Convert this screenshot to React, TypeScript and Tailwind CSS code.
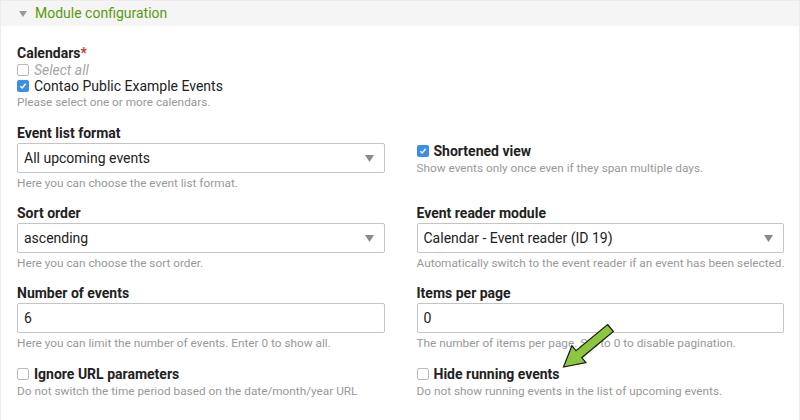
import React from "react";

const font = { fontFamily: "Roboto, 'Liberation Sans', sans-serif" };

function Check({ checked }: { checked?: boolean }) {
  if (checked) {
    return (
      <span className="mr-[5px] inline-flex h-[12px] w-[12px] shrink-0 items-center justify-center rounded-[2px] bg-[#3b8fe8]">
        <svg width="8" height="8" viewBox="0 0 8 8">
          <path d="M1.3 4.2 L3.2 6 L6.7 1.8" fill="none" stroke="#fff" strokeWidth="1.4" />
        </svg>
      </span>
    );
  }
  return (
    <span className="mr-[5px] inline-block h-[12px] w-[12px] shrink-0 rounded-[2px] border border-[#b9b9b9] bg-white" />
  );
}

function Select({ value }: { value: string }) {
  return (
    <div className="flex h-[30px] items-center justify-between rounded-[2px] border border-[#c4c4c4] bg-white pl-[6px] pr-[10px] text-[14px] text-[#222]">
      <span>{value}</span>
      <svg width="9" height="7" viewBox="0 0 9 7">
        <path d="M0 0 H9 L4.5 7 Z" fill="#8a8a8a" />
      </svg>
    </div>
  );
}

function TextInput({ value }: { value: string }) {
  return (
    <div className="flex h-[30px] items-center rounded-[2px] border border-[#c4c4c4] bg-white pl-[6px] text-[14px] text-[#222]">
      {value}
    </div>
  );
}

function Hint({ children }: { children: React.ReactNode }) {
  return <div className="whitespace-nowrap text-[11.8px] leading-[16px] text-[#999]">{children}</div>;
}

function Field({ label, hint, children }: { label: string; hint: string; children: React.ReactNode }) {
  return (
    <div>
      <div className="text-[14px] font-bold leading-[20px] text-[#222]">{label}</div>
      {children}
      <div className="mt-[2px]">
        <Hint>{hint}</Hint>
      </div>
    </div>
  );
}

function CheckField({ label, hint, checked }: { label: string; hint: string; checked?: boolean }) {
  return (
    <div>
      <div className="flex h-[18px] items-center text-[14px] font-bold text-[#222]">
        <Check checked={checked} />
        {label}
      </div>
      <Hint>{hint}</Hint>
    </div>
  );
}

export default function App() {
  return (
    <div className="relative h-[420px] w-[800px] overflow-hidden bg-white" style={font}>
      <div className="h-full border-x border-[#ececec]">
        <div className="flex h-[26px] items-center border-t border-[#ececec] bg-[#f5f5f5] pl-[18px]">
          <svg width="8" height="6" viewBox="0 0 8 6" className="mr-[8px]">
            <path d="M0 0 H8 L4 6 Z" fill="#999" />
          </svg>
          <span className="text-[14px] text-[#589b0e]">Module configuration</span>
        </div>

        <div className="pl-[16px] pr-[15px] pt-[18px]">
          <div>
            <div className="text-[14px] font-bold leading-[18px] text-[#222]">
              Calendars<span className="text-[#c33]">*</span>
            </div>
            <div className="flex h-[16px] items-center text-[14px] italic text-[#a5a5a5]">
              <Check />
              Select all
            </div>
            <div className="flex h-[16px] items-center text-[14px] text-[#222]">
              <Check checked />
              Contao Public Example Events
            </div>
            <Hint>Please select one or more calendars.</Hint>
          </div>

          <div className="mt-[13px] grid grid-cols-2 gap-x-[32px] gap-y-[12px]">
            <Field label="Event list format" hint="Here you can choose the event list format.">
              <Select value="All upcoming events" />
            </Field>
            <div className="pt-[19px]">
              <CheckField
                checked
                label="Shortened view"
                hint="Show events only once even if they span multiple days."
              />
            </div>

            <Field label="Sort order" hint="Here you can choose the sort order.">
              <Select value="ascending" />
            </Field>
            <Field
              label="Event reader module"
              hint="Automatically switch to the event reader if an event has been selected."
            >
              <Select value="Calendar - Event reader (ID 19)" />
            </Field>

            <Field label="Number of events" hint="Here you can limit the number of events. Enter 0 to show all.">
              <TextInput value="6" />
            </Field>
            <Field label="Items per page" hint="The number of items per page. Set to 0 to disable pagination.">
              <TextInput value="0" />
            </Field>

            <div className="pt-[2px]">
              <CheckField
                label="Ignore URL parameters"
                hint="Do not switch the time period based on the date/month/year URL"
              />
            </div>
            <div className="pt-[2px]">
              <CheckField
                label="Hide running events"
                hint="Do not show running events in the list of upcoming events."
              />
            </div>
          </div>
        </div>
      </div>

      <svg className="absolute left-[550px] top-[315px]" width="70" height="60" viewBox="0 0 70 60">
        <polygon
          points="57.6,9.5 63.4,16.5 31.8,42.7 35.9,47.7 13.5,52 21.9,30.7 26,35.7"
          fill="#8cc63e"
          stroke="#1a1a1a"
          strokeWidth="1.2"
          strokeLinejoin="miter"
        />
      </svg>
    </div>
  );
}
